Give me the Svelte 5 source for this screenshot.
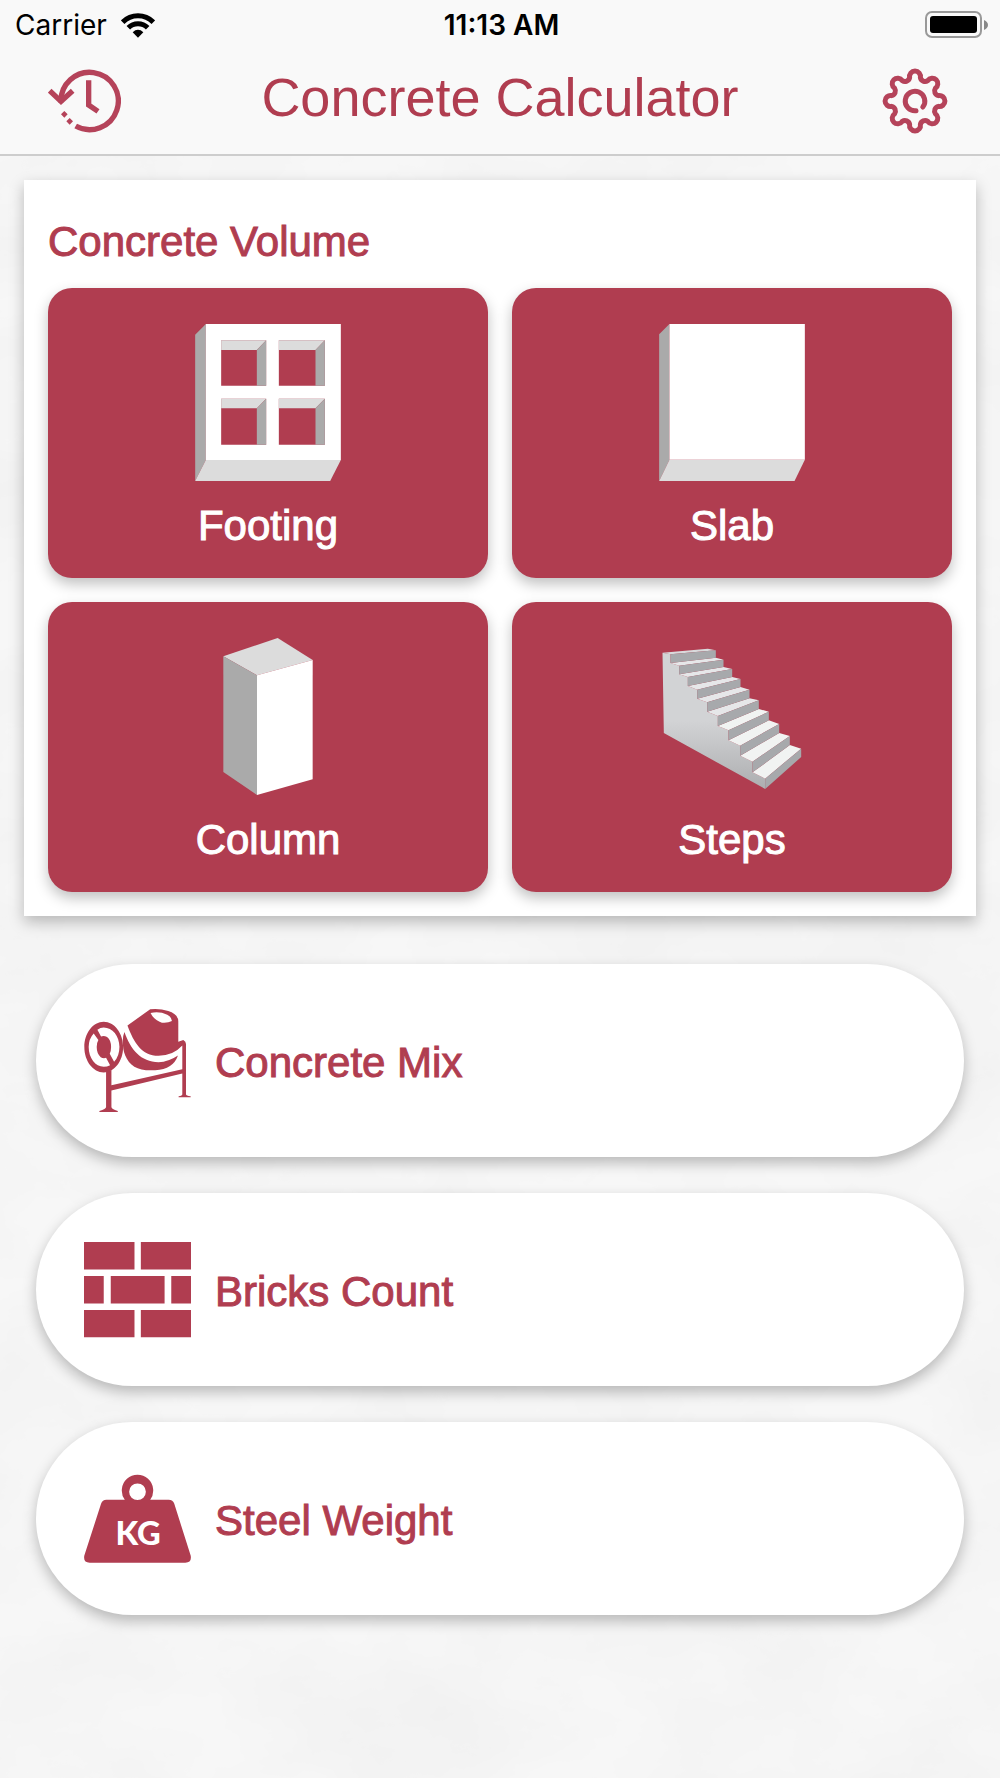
<script>
  const shapes = [
    { id: "footing", label: "Footing" },
    { id: "slab", label: "Slab" },
    { id: "column", label: "Column" },
    { id: "steps", label: "Steps" }
  ];

  const tools = [
    { id: "mix", label: "Concrete Mix" },
    { id: "bricks", label: "Bricks Count" },
    { id: "steel", label: "Steel Weight" }
  ];

  // each riser: left x, top, bottom, then right x, top, bottom
  const risers = [
    [93, 72, 98, 229, 60, 82],
    [119, 106, 132, 252, 88, 110],
    [145, 140, 167, 278, 116, 140],
    [173, 178, 205, 303, 146, 170],
    [203, 216, 244, 330, 178, 204],
    [235, 257, 287, 358, 210, 236],
    [267, 300, 330, 388, 244, 270],
    [302, 346, 376, 419, 281, 308],
    [339, 394, 426, 451, 317, 344],
    [377, 445, 476, 485, 355, 380]
  ];

  const stairSide =
    "69,67 " + risers.map(([x, t, b]) => `${x},${t} ${x},${b}`).join(" ") + " 73,308";

  const treads = risers.slice(1).map(([x, t, , rx, rt], i) => {
    const prev = risers[i];
    return `${prev[0]},${prev[2]} ${x},${t} ${rx},${rt} ${prev[3]},${prev[5]}`;
  });

  function gearPath(radius, lobe, notch) {
    const point = (deg) => {
      const a = (deg * Math.PI) / 180;
      return `${(radius * Math.cos(a)).toFixed(2)} ${(radius * Math.sin(a)).toFixed(2)}`;
    };
    let d = `M${point(-13)}`;
    for (let deg = 0; deg < 360; deg += 45) {
      d += `A${lobe} ${lobe} 0 1 1 ${point(deg + 13)}`;
      d += `A${notch} ${notch} 0 0 0 ${point(deg + 32)}`;
    }
    return d + "Z";
  }
</script>

<div class="screen">
  <svg class="plaster" aria-hidden="true">
    <filter id="plaster-noise" x="0" y="0" width="100%" height="100%">
      <feTurbulence type="fractalNoise" baseFrequency="0.006 0.009" numOctaves="7" seed="8" />
      <feColorMatrix values="0 0 0 0 0.45  0 0 0 0 0.45  0 0 0 0 0.45  0.14 0 0 0 -0.04" />
    </filter>
    <rect width="100%" height="100%" filter="url(#plaster-noise)" />
  </svg>

  <header>
    <div class="status">
      <div class="carrier">
        <span>Carrier</span>
        <svg class="wifi" viewBox="363 36 102 74" aria-hidden="true">
          <path d="M368 63A65 65 0 0 1 460 63" />
          <path d="M385 80A41 41 0 0 1 443 80" />
          <path class="solid" d="M414 110L398 93Q414 79 430 93Z" />
        </svg>
      </div>
      <span class="time">11:13 AM</span>
      <svg class="battery" viewBox="0 0 63 28" aria-hidden="true">
        <rect class="case" x="1" y="1" width="55" height="25" rx="6" />
        <rect x="5" y="5" width="47" height="17" rx="3" />
        <path class="knob" d="M59 9Q63 11 63 14Q63 17 59 19Z" />
      </svg>
    </div>

    <div class="navbar">
      <button class="icon-button" aria-label="History">
        <svg viewBox="145 203 219 198">
          <path class="line" d="M184 306A86 86 0 1 1 228 377" />
          <path class="line" d="M150 271L184 303L219 271" />
          <path class="line" d="M267 240V314L295 333" />
          <path class="dot" d="M194 332l10 10-10 10-10-10ZM210 353l10 10-10 10-10-10Z" />
        </svg>
      </button>
      <h1>Concrete Calculator</h1>
      <button class="icon-button" aria-label="Settings">
        <svg class="gear" viewBox="-36 -33 73 66">
          <path d={gearPath(24, 5.5, 4.8)} />
          <path d="M1 9.8A9.8 9.8 0 1 1 7.8 6" />
        </svg>
      </button>
    </div>
  </header>

  <main>
    <section class="card">
      <h2>Concrete Volume</h2>
      <div class="tiles">
        {#each shapes as shape}
          <button class="tile">
            {#if shape.id === "footing"}
              <svg viewBox="48 72 437 471" aria-hidden="true">
                <polygon class="shade" points="48,104 80,72 80,480 48,543" />
                <polygon class="soft" points="80,480 485,480 453,543 48,543" />
                <path
                  class="face"
                  fill-rule="evenodd"
                  d="M80 72H485V480H80ZM126 121H261V257H126ZM299 121H437V257H299ZM126 296H261V434H126ZM299 296H437V434H299Z" />
                <path
                  class="soft"
                  d="M126 121H261L233 150H126ZM299 121H437L409 150H299ZM126 296H261L233 325H126ZM299 296H437L409 325H299Z" />
                <path
                  class="shade"
                  d="M261 121V257H233V150ZM437 121V257H409V150ZM261 296V434H233V325ZM437 296V434H409V325Z" />
              </svg>
            {:else if shape.id === "slab"}
              <svg viewBox="58 71 438 472" aria-hidden="true">
                <polygon class="shade" points="58,102 89,71 89,479 58,543" />
                <polygon class="soft" points="89,479 496,479 465,543 58,543" />
                <rect class="face" x="89" y="71" width="407" height="408" />
              </svg>
            {:else if shape.id === "column"}
              <svg viewBox="72 53 268 471" aria-hidden="true">
                <polygon class="soft" points="72,108 235,53 340,119 173,165" />
                <polygon class="shade" points="72,108 173,165 173,524 72,455" />
                <polygon class="face" points="173,165 340,119 340,477 173,524" />
              </svg>
            {:else}
              <svg viewBox="69 23 417 471" aria-hidden="true">
                <linearGradient id="stair-side" x1="0" y1="0" x2="0" y2="1">
                  <stop offset="0.5" stop-color="#d2d3d5" />
                  <stop offset="1" stop-color="#adaeb0" />
                </linearGradient>
                <polygon fill="url(#stair-side)" points={stairSide} />
                <polygon fill="#d9dadc" points="69,67 205,55 229,60 93,72" />
                {#each treads as points, i}
                  <polygon fill={i < 5 ? "#e6e7e9" : "#f1f3f2"} {points} />
                {/each}
                {#each risers as [x, t, b, rx, rt, rb]}
                  <polygon fill="#a7a9ac" points={`${x},${t} ${rx},${rt} ${rx},${rb} ${x},${b}`} />
                {/each}
              </svg>
            {/if}
            <span>{shape.label}</span>
          </button>
        {/each}
      </div>
    </section>

    <nav>
      {#each tools as tool}
        <button class="pill">
          {#if tool.id === "mix"}
            <svg viewBox="73 57 320 308" aria-hidden="true">
              <path
                fill-rule="evenodd"
                d="M132 95C164 95 190 129 190 171S164 247 132 247S74 213 74 171S100 95 132 95ZM113 119L124 139Q133 136 142 141Q154 150 154 171Q154 183 150 191L163 215Q179 198 179 170C179 137 158 112 132 112Q122 112 113 119ZM102 130Q87 146 87 171C87 204 107 230 132 230Q142 230 151 225L139 203Q131 206 123 201Q111 191 111 171Q111 158 116 150Z" />
              <path
                fill-rule="evenodd"
                d="M203 106L271 58Q299 55 325 63Q355 73 355 94V155L370 150Q378 154 378 162V312Q378 316 392 318V321H356V318Q367 316 367 312V250L155 301V350Q155 356 174 362V365H119V362Q139 356 139 350V240H155V285L367 237V166Q340 196 296 197C245 196 222 157 203 106ZM272 69Q298 63 322 74Q336 82 336 93Q323 100 306 98Q283 91 272 69Z" />
              <path d="M194 126C212 178 243 216 296 216Q326 215 354 196Q340 237 286 240C235 243 210 228 196 195Q189 180 189 151Q189 138 194 126Z" />
            </svg>
          {:else if tool.id === "bricks"}
            <svg viewBox="73 55 320 308" aria-hidden="true">
              <path
                d="M73 67H224V149H73ZM243 67H393V149H243ZM73 169H132V251H73ZM153 169H314V251H153ZM334 169H393V251H334ZM73 270H224V352H73ZM243 270H393V352H243Z" />
            </svg>
          {:else}
            <svg viewBox="73 52 320 308" aria-hidden="true">
              <path
                fill-rule="evenodd"
                d="M195 150A47 47 0 1 1 271 150H326Q339 150 343 162L392 317Q396 338 376 338H90Q70 338 74 317L124 162Q128 150 140 150ZM233 101A25 25 0 1 0 233 151A25 25 0 1 0 233 101Z" />
              <text x="235" y="284" text-anchor="middle">KG</text>
            </svg>
          {/if}
          <span>{tool.label}</span>
        </button>
      {/each}
    </nav>
  </main>
</div>

<style>
  :global(body) {
    margin: 0;
    background: #f7f7f7;
  }

  .screen {
    position: relative;
    min-height: 100vh;
    color: #b03d50;
    font-family: "Liberation Sans", Helvetica, Arial, sans-serif;
  }

  .plaster {
    position: absolute;
    width: 100%;
    height: 100%;
  }

  button {
    border: 0;
    font: inherit;
    cursor: pointer;
  }

  svg {
    display: block;
    flex: none;
  }

  header {
    position: relative;
    background: #f9f9f9;
    border-bottom: 2px solid #cdcdcd;
  }

  .status {
    display: grid;
    grid-template-columns: 1fr auto 1fr;
    align-items: center;
    height: 50px;
    padding: 0 12px 0 15px;
    color: #000;
    font-family: Inter, sans-serif;
    font-size: 28px;
    line-height: 50px;
  }

  .carrier {
    display: flex;
    align-items: center;
    gap: 14px;
  }

  .wifi {
    width: 34px;
    height: 25px;
    fill: none;
    stroke: #000;
    stroke-width: 15;
  }

  .wifi .solid {
    fill: #000;
    stroke: none;
  }

  .time {
    font-weight: 600;
  }

  .battery {
    width: 63px;
    height: 28px;
    justify-self: end;
  }

  .case {
    fill: none;
    stroke: #999;
    stroke-width: 2;
  }

  .knob {
    fill: #888;
  }

  .navbar {
    display: grid;
    grid-template-columns: 1fr auto 1fr;
    align-items: center;
    height: 102px;
    padding: 0 48px 2px;
  }

  .icon-button {
    padding: 0;
    background: none;
  }

  .icon-button:first-child {
    justify-self: start;
  }

  .icon-button:last-child {
    justify-self: end;
  }

  .icon-button svg {
    width: 73px;
    height: 66px;
  }

  .line {
    fill: none;
    stroke: #b5435a;
    stroke-width: 16;
  }

  .dot {
    fill: #b5435a;
  }

  .gear {
    fill: none;
    stroke: #b5435a;
    stroke-width: 5;
    stroke-linecap: round;
  }

  h1 {
    margin: 0;
    padding-bottom: 8px;
    font-size: 54px;
    font-weight: 400;
    line-height: 60px;
  }

  main {
    position: relative;
    padding: 24px;
  }

  .card {
    padding: 36px 24px 24px;
    background: #fff;
    box-shadow: 0 6px 14px rgba(0, 0, 0, 0.25);
  }

  h2,
  .tile,
  .pill {
    font-size: 42px;
    font-weight: 400;
    line-height: 52px;
    -webkit-text-stroke: 1px currentColor;
  }

  h2 {
    margin: 0 0 20px;
  }

  .tiles {
    display: grid;
    grid-template-columns: 1fr 1fr;
    gap: 24px;
  }

  .tile {
    display: flex;
    flex-direction: column;
    align-items: center;
    gap: 19px;
    padding: 36px 24px 26px;
    border-radius: 24px;
    background: #b03d50;
    color: #fff;
    box-shadow: 0 6px 14px rgba(0, 0, 0, 0.25);
  }

  .tile svg {
    width: 146px;
    height: 157px;
  }

  .face {
    fill: #fff;
  }

  .soft {
    fill: #dcdcdc;
  }

  .shade {
    fill: #aaa;
  }

  nav {
    display: flex;
    flex-direction: column;
    gap: 36px;
    padding: 48px 12px;
  }

  .pill {
    display: flex;
    align-items: center;
    gap: 24px;
    padding: 45px 48px;
    border-radius: 97px;
    background: #fff;
    color: #b03d50;
    box-shadow: 0 6px 14px rgba(0, 0, 0, 0.25);
  }

  .pill span {
    padding-top: 4px;
  }

  .pill svg {
    width: 107px;
    height: 103px;
    fill: #b03d50;
  }

  .pill text {
    fill: #fff;
    font-family: Lato, sans-serif;
    font-size: 98px;
    font-weight: 900;
    -webkit-text-stroke: 0;
  }
</style>
